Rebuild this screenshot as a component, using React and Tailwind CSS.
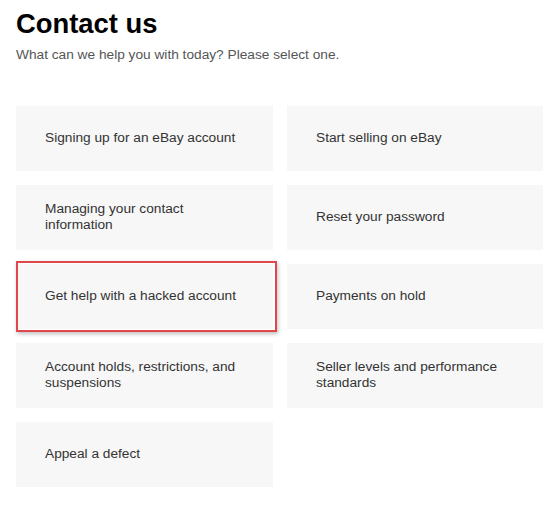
const TOPICS = [
  'Signing up for an eBay account',
  'Start selling on eBay',
  'Managing your contact information',
  'Reset your password',
  'Get help with a hacked account',
  'Payments on hold',
  'Account holds, restrictions, and suspensions',
  'Seller levels and performance standards',
  'Appeal a defect',
]

// the hacked-account tile carries the red call-out frame
const HIGHLIGHT = 4

function TopicCard({ label, highlighted }) {
  return (
    <div className="relative h-[65px] bg-[#f7f7f7] flex items-center pl-[29px] pr-6 cursor-pointer">
      <span className="-mt-[2px] text-[13.7px] leading-[16px] text-[#333]">{label}</span>
      {highlighted && (
        <div className="absolute left-0 -top-[3px] -bottom-[3px] -right-[4px] border-2 border-[#e0474c] shadow-[1px_2px_4px_rgba(0,0,0,0.25)] pointer-events-none" />
      )}
    </div>
  )
}

export default function App() {
  return (
    <div className="w-[550px] h-[505px] bg-white px-4 pt-[8px] font-['Liberation_Sans',Arial,sans-serif]">
      <h1 className="text-[27.4px] leading-[32px] font-bold text-black">Contact us</h1>
      <p className="mt-[7px] text-[13.7px] leading-[16px] text-[#555]">
        What can we help you with today? Please select one.
      </p>

      <div className="mt-[43px] grid grid-cols-[257px_256px] gap-x-[14px] gap-y-[14px]">
        {TOPICS.map((t, i) => (
          <TopicCard key={t} label={t} highlighted={i === HIGHLIGHT} />
        ))}
      </div>
    </div>
  )
}
